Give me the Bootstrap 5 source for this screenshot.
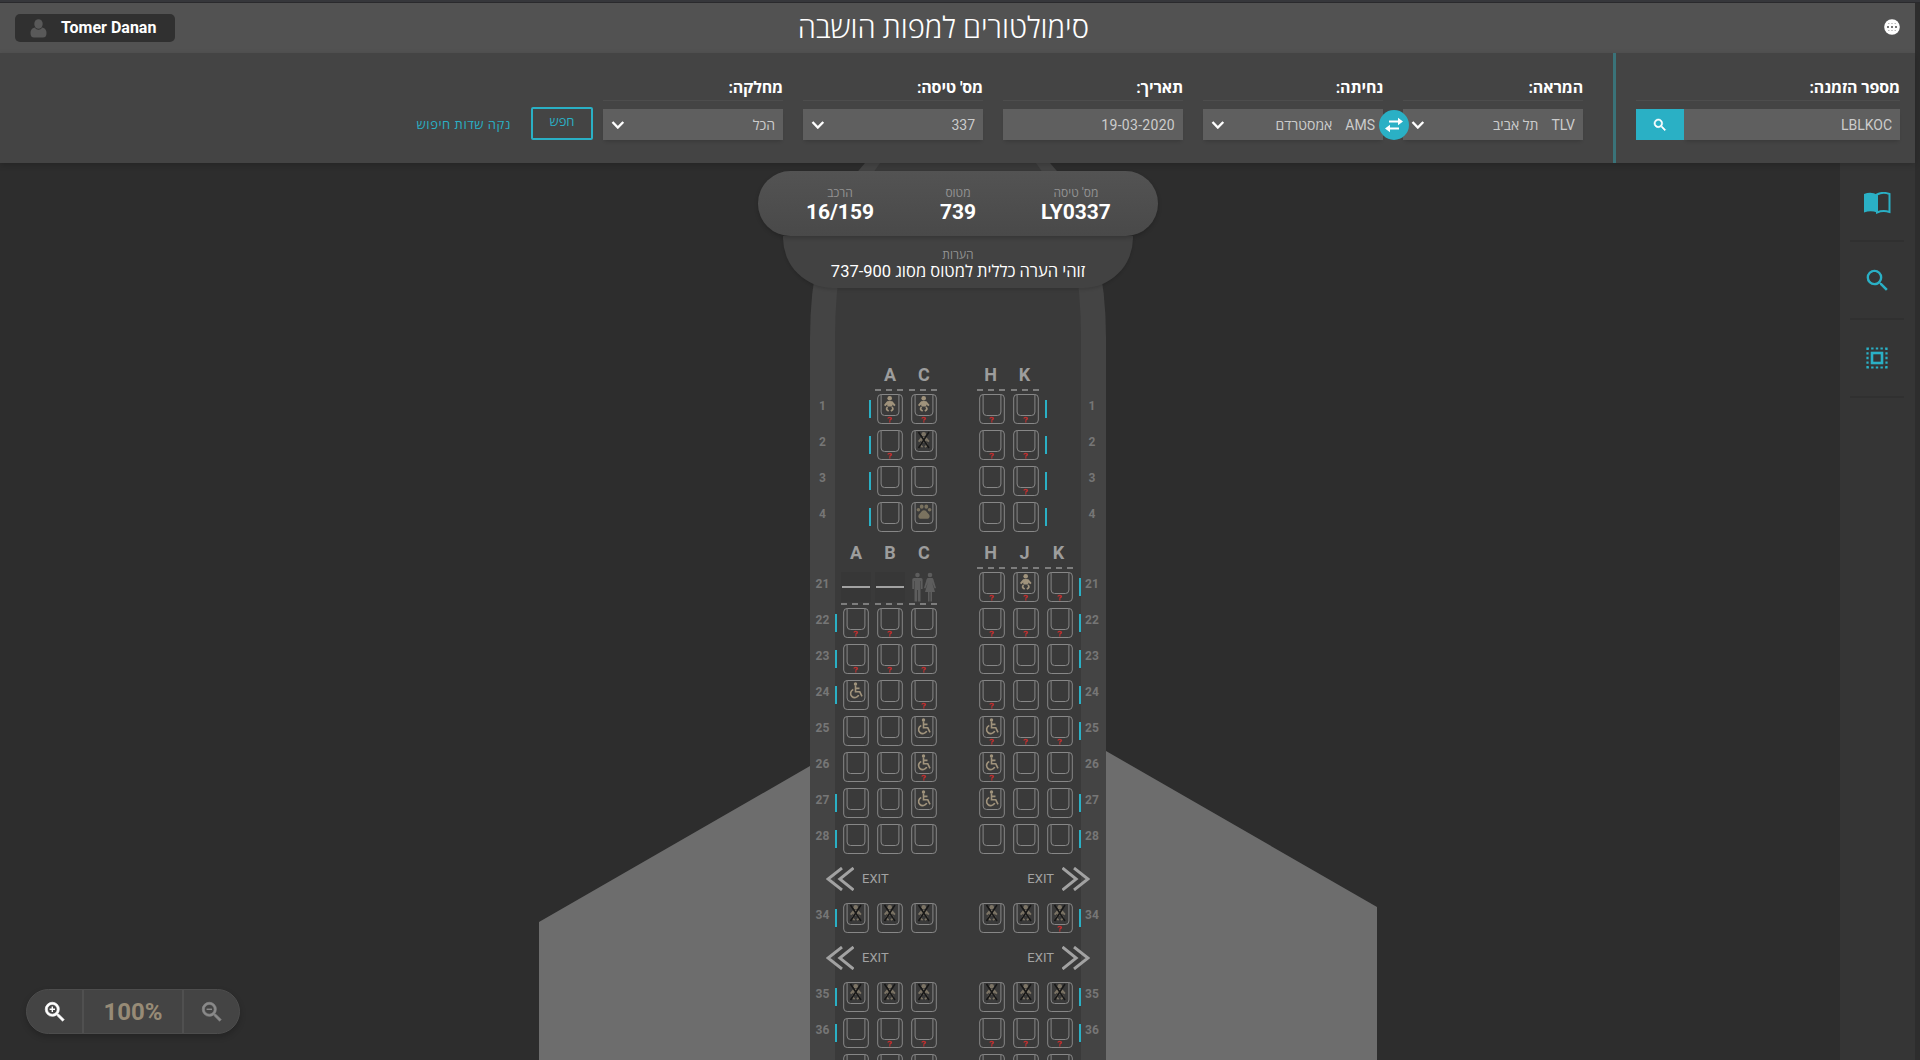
<!DOCTYPE html>
<html lang="he" dir="rtl">
<head>
<meta charset="utf-8">
<title>סימולטורים למפות הושבה</title>
<link href="https://cdn.jsdelivr.net/npm/bootstrap@5.3.0/dist/css/bootstrap.min.css" rel="stylesheet">
<style>
:root{--aqua:#2ab0c5}
body{width:1920px;height:1060px;overflow:hidden;background:#2d2d2d;color:#fff;font-family:Roboto,"Open Sans","Liberation Sans",sans-serif;font-size:14px;line-height:1}
.topstrip{height:3px;background:#36373b;border-bottom:1px solid #2a2a2d}
.shell{width:1915px;margin-right:5px}
.titlebar{height:50px;background:#525252;display:grid;grid-template-columns:811px 292px 1fr;padding:0 15px}
.titlebar h1{font-size:29.2px;font-weight:300;line-height:50px;margin:0;white-space:nowrap}
.user-chip{width:160px;height:28px;margin-top:11px;border-radius:5px;background:#303030;font-size:16px;font-weight:700;padding-left:15px;gap:14px}
.filters{height:110px;background:#444;padding:0 15px 0 0;position:relative;z-index:3;box-shadow:0 2px 6px rgba(0,0,0,.18)}
.order-block{width:287px;border-left:3px solid #3a7379;padding-left:20px}
.searchset{gap:20px;margin-right:30px}
.field{padding-top:22px;width:180px}
.field label{height:26px;border-bottom:1px solid #4d4d4d;line-height:26px;font-size:16px;font-weight:700;letter-spacing:-.15px;display:block;white-space:nowrap}
.box{height:31px;margin-top:8px;background:#5f5f5f;color:#ccc;font-size:14px;padding:0 8px;box-shadow:0 3px 4px -2px rgba(0,0,0,.2)}
.box .city{margin-right:13px}
.find{width:48px;height:31px;background:var(--aqua);margin-top:8px}
.swap{position:absolute;width:30px;height:30px;border-radius:50%;background:var(--aqua);left:1379px;top:57px;z-index:2}
.btn-find{width:62px;height:33px;margin:54px 10px 0 0;border:2px solid var(--aqua);border-radius:2px;color:var(--aqua);font-size:13px;padding:0 0 3px}
.btn-find:hover{color:var(--aqua)}
.clear-link{color:var(--aqua);text-decoration:none;font-size:13px;letter-spacing:.55px;margin:65px 20px 0 0;white-space:nowrap}
.stage{height:897px;position:relative;overflow:hidden;direction:ltr}
.plane{position:absolute;left:0;top:0}
.side{width:75px;height:897px;background:#353535;padding:0 11px 0 10px;z-index:2}
.side a{height:78px;border-bottom:2px solid #303030;display:flex;align-items:center;justify-content:center;color:var(--aqua)}
.side a:first-child{height:79px;padding-top:3px}
.flight{position:absolute;left:758px;top:8px;width:400px}
.pill{height:65px;border-radius:33px;background:linear-gradient(#535353,#494949);padding:15px 34px 0;position:relative;z-index:1;box-shadow:0 2px 4px rgba(0,0,0,.2)}
.pill>div{width:96px}
.cap{font-size:12px;color:#939393;line-height:14px}
.num{font-size:21px;font-weight:700;line-height:24px}
.note{width:350px;height:52px;margin:0 auto;border-radius:0 0 50px 50px;background:#424242;padding-top:12px;box-shadow:0 2px 3px rgba(0,0,0,.12)}
.remark{font-size:16.5px;line-height:19px}
.cabin{position:absolute;left:810px;top:0;width:296px;padding-top:203px}
.line{display:grid;grid-template-columns:25px 8px 34px 34px 34px 34px 34px 34px 34px 25px;height:36px}
.letters{height:28px;font-size:18px;font-weight:700;color:#9d9d9d}
.letters span{width:26px;text-align:center}
.letters .eastside{width:23px}
.letters.economy{margin-top:6px}
.rowno{font-size:12px;font-weight:700;color:#767676;padding-top:6px;text-align:center;letter-spacing:.2px}
.rowno:last-child{padding-right:3px}
.cell{position:relative;width:26px;height:30px}
.cell>svg{display:block}
.wallcell{margin-left:-2px}
.dash{position:absolute;left:-2px;top:-5px;width:28px;height:2px;background:repeating-linear-gradient(90deg,#7d7d7d 0 6px,transparent 6px 11px)}
.win{position:absolute;top:6px;width:2px;height:18px;background:var(--aqua)}
.win.west{left:-8px}
.win.east{left:32px}
.exitrow{height:43px;padding:7px 16px 0;color:#a2a2a2;font-size:13px}
.exitrow span{line-height:23px}
.flip{transform:scaleX(-1)}
.zoomer{position:absolute;left:26px;top:826px;width:214px;height:45px;border-radius:23px;background:#444;border:1px solid #4d4d4d;box-shadow:0 3px 6px rgba(0,0,0,.2)}
.zoomer div{display:flex;align-items:center;justify-content:center;height:43px;width:55px}
.zoomer .pct{width:102px;border:solid #505050;border-width:0 2px;color:#978b76;font-size:24px;font-weight:700}
</style>
</head>
<body>
<svg width="0" height="0" class="position-absolute">
<defs>
<symbol id="seat" viewBox="0 0 26 30"><g fill="none" stroke="#878787"><rect x=".7" y=".5" width="24.6" height="29" rx="3.5"/><path d="M4.1 .5V18a3.5 3.5 0 0 0 3.500 3.500H18.400a3.500 3.500 0 0 0 3.500-3.500V.5"/></g></symbol>
<symbol id="q" viewBox="0 0 26 30"><path d="M11 24.500c0-1.500 3.500-1.500 3.500 0 0 1-1.700.9-1.700 2.200M12.800 27.300v1.300" fill="none" stroke="#c02f2f" stroke-width="1.400"/></symbol>
<symbol id="baby" viewBox="0 0 26 30"><g fill="#a0937c"><circle cx="12.700" cy="4.300" r="2.300"/><path d="M12.700 7l-2.600.2L7 11l1.200 1.200L10.300 10.400v2.100h5V10.400l2 1.800L18.600 11l-3.200-3.800z"/></g><g fill="none" stroke="#a0937c" stroke-width="1.800"><path d="M10.500 13q-2.300 2.500 1.200 4M15 13q2.300 2.500-1.200 4"/></g></symbol>
<symbol id="nobaby" viewBox="0 0 26 30"><g opacity=".65"><use href="#baby"/></g><path d="M7.500 2l10.500 16M18 2L7.500 18" stroke="#171717" stroke-width="1.500"/></symbol>
<symbol id="paw" viewBox="0 0 26 30"><g fill="#7a725f"><ellipse cx="10.700" cy="4.700" rx="1.900" ry="2.100"/><ellipse cx="15.300" cy="4.700" rx="1.900" ry="2.100"/><circle cx="7.400" cy="7.800" r="1.800"/><circle cx="18.600" cy="7.800" r="1.800"/><path d="M13 8.200c2 0 3 2.200 4.600 3.700 2.200 2.200.6 4.900-1.600 4.900H10c-2.200 0-3.800-2.700-1.600-4.900C10 10.400 11 8.200 13 8.200z"/></g></symbol>
<symbol id="chair" viewBox="0 0 26 30"><g fill="none" stroke="#a0937c" stroke-width="1.600"><path d="M12.500 5.500v6.300h4.300l2.200 4.500M12.500 8.400h4"/><path d="M10.300 9.500a4.200 4.200 0 1 0 5.400 5.500"/></g><circle cx="12.500" cy="4" r="1.700" fill="#a0937c"/></symbol>
<symbol id="wc" viewBox="0 0 26 30"><g fill="#5d5d5d"><circle cx="6.500" cy="3" r="2.300"/><path d="M3 6h7q1.600 0 1.600 1.600V17H10V9h-.5v20.500H6.900V18h-.8v11.500H3.500V9H3v8H1.300V7.600Q1.300 6 3 6z"/><circle cx="19" cy="3" r="2.300"/><path d="M17 6h4q1 0 1.300 1L25 16l-1.400.6L21 10l3 10h-3v9.500h-1.600V20h-.8v9.500H17V20h-3l3-10-2.600 6.600L13 16l2.700-9q.3-1 1.300-1z"/></g></symbol>
<symbol id="wall" viewBox="0 0 30 30"><path d="M0 0h30v30H0z" fill="#373737"/><path d="M1 15h28" stroke="#a2a2a2" stroke-width="2"/></symbol>
<symbol id="exit" viewBox="0 0 28 24"><path d="M16 1L2 12l14 11M27.500 1L13.800 12l13.700 11" fill="none" stroke="#a2a2a2" stroke-width="2.900"/></symbol>
<symbol id="chev" viewBox="0 0 14 8"><path d="M1.500 1l5.300 5.500L12.300 1" fill="none" stroke="#fff" stroke-width="2.400"/></symbol>
<symbol id="lens" viewBox="0 0 24 24"><path fill="currentColor" d="M15.500 14h-.79l-.28-.27A6.471 6.471 0 0 0 16 9.500 6.500 6.500 0 1 0 9.500 16c1.610 0 3.090-.59 4.230-1.570l.27.28v.79l5 4.990L20.490 19l-4.990-5zm-6 0C7.010 14 5 11.990 5 9.500S7.010 5 9.500 5 14 7.010 14 9.500 11.990 14 9.500 14z"/></symbol>
</defs>
</svg>
<div class="topstrip"></div>
<div class="shell">
<header class="titlebar">
  <div class="pt-3"><svg class="d-block" width="16" height="16" viewBox="0 0 16 16"><circle cx="8" cy="8" r="7.800" fill="#fff"/><g fill="#777"><path d="M3 7h2v2H3zM7 7h2v2H7zM11 7h2v2h-2z"/><path d="M4 4h1.500v1H4zM7.200 4h1.600v1H7.200zM10.500 4H12v1h-1.500zM4 11h1.500v1H4zM7.200 11h1.600v1H7.200zM10.500 11H12v1h-1.500z" opacity=".5"/></g></svg></div>
  <h1>סימולטורים למפות הושבה</h1>
  <div class="d-flex justify-content-end"><div class="user-chip d-flex align-items-center" dir="ltr"><svg width="17" height="19" viewBox="0 0 17 19"><g fill="#595959"><ellipse cx="8.500" cy="5" rx="4.200" ry="4.800"/><path d="M4.500 8.500Q8.500 13 12.500 8.500 16.500 9.500 16.500 14q0 4.500-3.500 4.500H4Q.5 18.500.5 14 .5 9.500 4.500 8.500z"/></g></svg><span>Tomer Danan</span></div></div>
</header>
<section class="filters d-flex">
  <div class="order-block"><div class="field w-100"><label>מספר הזמנה:</label>
    <div class="d-flex"><div class="box flex-grow-1 d-flex align-items-center">LBLKOC</div><div class="find d-flex align-items-center justify-content-center"><svg width="16" height="16" stroke="#fff" stroke-width=".8"><use href="#lens"/></svg></div></div></div></div>
  <div class="searchset d-flex">
    <div class="field"><label>המראה:</label><div class="box d-flex align-items-center"><span>TLV</span><span class="city ms-auto">תל אביב</span><svg width="14" height="8"><use href="#chev"/></svg></div></div>
    <div class="field"><label>נחיתה:</label><div class="box d-flex align-items-center"><span>AMS</span><span class="city ms-auto">אמסטרדם</span><svg width="14" height="8"><use href="#chev"/></svg></div></div>
    <div class="field"><label>תאריך:</label><div class="box d-flex align-items-center"><span dir="ltr" style="letter-spacing:.3px">19-03-2020</span></div></div>
    <div class="field"><label>מס' טיסה:</label><div class="box d-flex align-items-center justify-content-between"><span>337</span><svg width="14" height="8"><use href="#chev"/></svg></div></div>
    <div class="field"><label>מחלקה:</label><div class="box d-flex align-items-center justify-content-between"><span>הכל</span><svg width="14" height="8"><use href="#chev"/></svg></div></div>
  </div>
  <button class="btn btn-find">חפש</button>
  <a class="clear-link" href="#">נקה שדות חיפוש</a>
  <div class="swap d-flex align-items-center justify-content-center"><svg width="20" height="18" viewBox="0 0 20 18"><path d="M5 5.500h10M15 12.500H5" stroke="#fff" stroke-width="2"/><path d="M14 1.800l5 3.700-5 3.700zM6 8.800l-5 3.700 5 3.700z" fill="#fff"/></svg></div>
</section>
<main class="stage d-flex justify-content-end">
  <svg class="plane" width="1840" height="897">
    <path d="M810 603L539 759V897H810zM1106 588l271 156V897H1106z" fill="#6d6d6d"/>
    <path d="M865 0H1050Q1106 60 1106 175V897H810V175Q810 60 865 0z" fill="#444"/>
    <path d="M880 0H1036Q1081 60 1081 175V897H835V175Q835 60 880 0z" fill="#3a3a3a"/>
  </svg>
  <div class="cabin" id="cabin"></div>
  <div class="flight text-center">
    <div class="pill d-flex justify-content-between" dir="rtl">
      <div><div class="cap">מס' טיסה</div><div class="num">LY0337</div></div>
      <div><div class="cap">מטוס</div><div class="num">739</div></div>
      <div><div class="cap">הרכב</div><div class="num">16/159</div></div>
    </div>
    <div class="note" dir="rtl"><div class="cap">הערות</div><div class="remark">זוהי הערה כללית למטוס מסוג 737-900</div></div>
  </div>
  <div class="zoomer d-flex">
    <div><svg width="26" height="26" viewBox="0 0 24 24" style="color:#fff" stroke="#fff" stroke-width=".6"><use href="#lens"/><path d="M9.500 7v5M7 9.500h5" stroke-width="1.300"/></svg></div>
    <div class="pct">100%</div>
    <div><svg width="26" height="26" viewBox="0 0 24 24" style="color:#8a8a8a" stroke="#8a8a8a" stroke-width=".6"><use href="#lens"/><path d="M7 9.500h5" stroke-width="1.300"/></svg></div>
  </div>
  <nav class="side">
    <a href="#"><svg width="28" height="22" viewBox="0 0 28 22"><path d="M14 2.500Q8-.5 1 2V20.500Q8 18 14 20.500z" fill="currentColor"/><path d="M14 2.500Q20-.5 26.500 2V20Q20 18 14 20.500z" fill="none" stroke="currentColor" stroke-width="2"/></svg></a>
    <a href="#"><svg width="29" height="29"><use href="#lens"/></svg></a>
    <a href="#"><svg width="22" height="22" viewBox="0 0 22 22"><path d="M.5 1.500h21M.5 20.500h21M1.500 .5v21M20.500 .5v21" stroke="currentColor" stroke-width="2.200" stroke-dasharray="2.400 2.250" fill="none"/><rect x="6" y="6" width="10" height="10" fill="none" stroke="currentColor" stroke-width="2.600"/></svg></a>
  </nav>
</main>
</div>
<script src="https://cdn.jsdelivr.net/npm/bootstrap@5.3.0/dist/js/bootstrap.bundle.min.js"></script>
<script>
// Seat codes: s seat, b bassinet, n no infants, p pet, w wheelchair, x wall, t toilet, . empty; "?" adds the query mark.
// Third item: L and R mark the sides that have a window. Fourth: which seats have a dashed divider above them.
const rows = [
  ['letters','. A C . H K .'],
  [1,'. b? b? . s? s? .','LR','d'],[2,'. s? n . s? s? .','LR'],[3,'. s s . s s? .','LR'],[4,'. s p . s s .','LR'],
  ['letters','A B C . H J K','economy'],
  [21,'x x t . s? b? s?','R','r'],[22,'s? s? s . s? s? s?','LR','l'],[23,'s? s? s? . s s s','LR'],[24,'w s s? . s? s s','LR'],
  [25,'s s w . w? s? s?','R'],[26,'s s w? . w? s s',''],[27,'s s w . w s s','LR'],[28,'s s s . s s s','LR'],
  ['exit'],[34,'n n n . n n n?','LR'],['exit'],
  [35,'n n n . n n n','LR'],[36,'s s? s? . s? s? s?','LR'],[37,'s s s . s s s','']
];
const icon = {b:'baby',n:'nobaby',p:'paw',w:'chair'};
const use = (id,w=26,h=30,cls='') => `<svg width="${w}" height="${h}" class="${cls}"><use href="#${id}"/></svg>`;
let html = '';
for (const [no, codes, side='', dash=''] of rows) {
  if (no === 'exit') {
    html += `<div class="exitrow d-flex">${use('exit',28,24)}<span class="ms-2">EXIT</span><span class="ms-auto me-2">EXIT</span>${use('exit',28,24,'flip')}</div>`;
  } else if (no === 'letters') {
    html += `<div class="line letters ${side}"><i></i><i></i>${codes.split(' ').map((c,i)=>`<span${i>3?' class="eastside"':''}>${c==='.'?'':c}</span>`).join('')}</div>`;
  } else {
    const biz = no < 10, num = no > 36 ? '' : no;
    html += `<div class="line"><div class="rowno">${num}</div><i></i>`;
    codes.split(' ').forEach((c,i) => {
      let s = '';
      if (c[0] === 'x') s = use('wall',30,30,'wallcell');
      else if (c[0] === 't') s = use('wc');
      else if (c[0] !== '.') s = `<svg width="26" height="30"><use href="#seat"/>${icon[c[0]]?`<use href="#${icon[c[0]]}"/>`:''}${c[1]?'<use href="#q"/>':''}</svg>`;
      if (c[0] !== '.' && (dash==='d' || dash==='r' && i>3 || dash==='l' && i<3)) s += '<div class="dash"></div>';
      if (i === (biz?1:0) && side.includes('L')) s += '<div class="win west"></div>';
      if (i === (biz?5:6) && side.includes('R')) s += '<div class="win east"></div>';
      html += `<div class="cell">${s}</div>`;
    });
    html += `<div class="rowno">${num}</div></div>`;
  }
}
document.getElementById('cabin').innerHTML = html;
</script>
</body>
</html>
